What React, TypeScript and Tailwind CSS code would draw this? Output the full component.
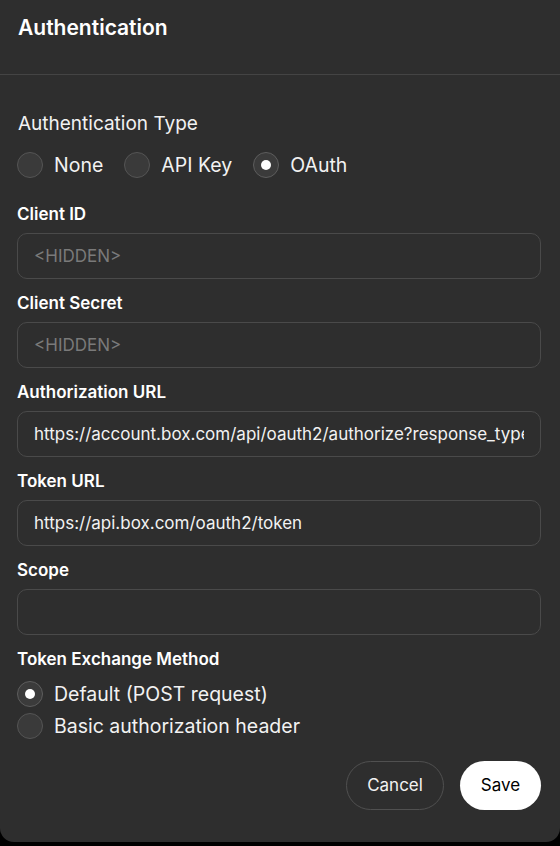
import { useState } from "react";

const FONT = { fontFamily: 'Inter, "Noto Sans", sans-serif' };

const Radio = ({ checked, label, onClick }: { checked: boolean; label: string; onClick: () => void }) => (
  <button type="button" onClick={onClick} className="flex items-center gap-[11px] h-[26px]">
    <span
      className={
        "flex items-center justify-center w-[26px] h-[26px] rounded-full border " +
        (checked ? "border-[#5d5d5d] bg-[#3b3b3b]" : "border-[#555] bg-[#3a3a3a]")
      }
    >
      {checked && <span className="w-[10px] h-[10px] rounded-full bg-white" />}
    </span>
    <span className="text-[19.5px] leading-[26px] text-[#f2f2f2]">{label}</span>
  </button>
);

const Field = ({ label, value, placeholder }: { label: string; value?: string; placeholder?: string }) => (
  <div className="flex flex-col">
    <label className="text-[17px] leading-[22px] font-semibold text-white mb-2">{label}</label>
    <input
      readOnly
      value={value ?? ""}
      placeholder={placeholder}
      className="h-[46px] w-full rounded-[10px] border border-[#4a4a4a] bg-[#2e2e2e] px-4 text-[17px] text-[#f2f2f2] placeholder:text-[#7a7a7a] outline-none"
      style={FONT}
    />
  </div>
);

const App = () => {
  const [authType, setAuthType] = useState("oauth");
  const [method, setMethod] = useState("default");

  return (
    <div className="min-h-[846px] bg-black" style={FONT}>
      <div className="h-[842px] bg-[#2e2e2e] rounded-b-[14px]">
        {/* ヘッダー */}
        <div className="h-[75px] border-b border-[#444] px-[18px] pt-[14px]">
          <h1 className="text-[21px] leading-[28px] font-semibold text-white">Authentication</h1>
        </div>

        <div className="px-[17px] pt-[36px]">
          <p className="text-[19px] leading-[26px] text-[#f2f2f2] ml-px">Authentication Type</p>
          <div className="flex items-center gap-[21px] mt-[15px]">
            <Radio checked={authType === "none"} label="None" onClick={() => setAuthType("none")} />
            <Radio checked={authType === "apikey"} label="API Key" onClick={() => setAuthType("apikey")} />
            <Radio checked={authType === "oauth"} label="OAuth" onClick={() => setAuthType("oauth")} />
          </div>

          <div className="flex flex-col gap-[13px] mt-[25px] pr-[2px]">
            <Field label="Client ID" placeholder="<HIDDEN>" />
            <Field label="Client Secret" placeholder="<HIDDEN>" />
            <Field
              label="Authorization URL"
              value="https://account.box.com/api/oauth2/authorize?response_type=code"
            />
            <Field label="Token URL" value="https://api.box.com/oauth2/token" />
            <Field label="Scope" />

            <div className="flex flex-col">
              <p className="text-[17px] leading-[22px] font-semibold text-white">Token Exchange Method</p>
              <div className="flex flex-col gap-[6px] mt-[11px]">
                <Radio checked={method === "default"} label="Default (POST request)" onClick={() => setMethod("default")} />
                <Radio checked={method === "basic"} label="Basic authorization header" onClick={() => setMethod("basic")} />
              </div>
            </div>
          </div>

          <div className="flex justify-end gap-4 mt-[22px] pr-[2px]">
            <button className="h-[49px] w-[98px] rounded-full border border-[#505050] text-[17px] text-[#f2f2f2]">
              Cancel
            </button>
            <button className="h-[49px] w-[81px] rounded-full bg-white text-[17px] text-black">Save</button>
          </div>
        </div>
      </div>
    </div>
  );
};

export default App;
